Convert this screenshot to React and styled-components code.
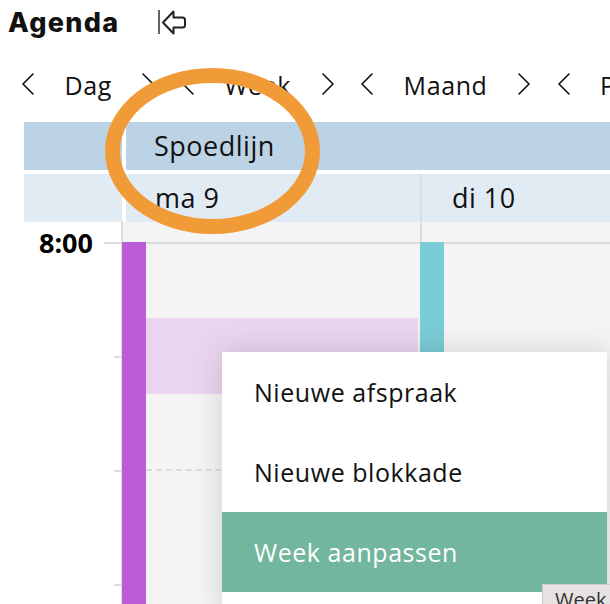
import React from "react";
import styled, { createGlobalStyle } from "styled-components";

const Global = createGlobalStyle`
  html, body {
    margin: 0;
    padding: 0;
    background: #fff;
    font-family: "Open Sans", "Noto Sans", sans-serif;
    color: #111;
  }
`;

const Page = styled.div`
  position: relative;
  width: 610px;
  height: 604px;
  overflow: hidden;
  background: #fff;
`;

const Header = styled.header`
  display: flex;
  align-items: center;
  height: 44px;
  padding-left: 8px;
`;

const Title = styled.h1`
  margin: 0;
  width: 149px;
  font-family: Inter, sans-serif;
  font-size: 27px;
  font-weight: 800;
  letter-spacing: 1.3px;
  color: #111;
`;

const Nav = styled.nav`
  display: flex;
  align-items: center;
  height: 34px;
  margin-top: 24px;
  padding-left: 22px;
  gap: 27.5px;
  white-space: nowrap;
`;

const NavGroup = styled.div`
  display: flex;
  align-items: center;
  gap: 30.5px;
  flex: none;
`;

const NavLabel = styled.span`
  font-size: 25px;
  line-height: 34px;
  letter-spacing: 0.6px;
`;

const Calendar = styled.section`
  margin-top: 20px;
  padding-left: 24px;
`;

const ResourceRow = styled.div`
  display: grid;
  grid-template-columns: 98px 1fr;
  column-gap: 4px;
  height: 48px;
  margin-bottom: 4px;
`;

const ResourceCell = styled.div`
  display: flex;
  align-items: center;
  box-sizing: border-box;
  padding: 0 0 2px ${(p) => p.$inset || 0}px;
  background: #bcd3e6;
  font-size: 27px;
  letter-spacing: 0.5px;
`;

const DayRow = styled.div`
  display: grid;
  grid-template-columns: 102px 294px 1fr;
  height: 48px;
`;

const DayCell = styled.div`
  display: flex;
  align-items: center;
  box-sizing: border-box;
  padding: 0 0 2px ${(p) => p.$inset || 0}px;
  margin-right: ${(p) => (p.$gutter ? 4 : 0)}px;
  background: #e0ebf4;
  border-left: ${(p) => (p.$divider ? "2px solid #dcdcdc" : "none")};
  font-size: 27px;
  letter-spacing: 0.5px;
`;

const Body = styled.div`
  display: grid;
  grid-template-columns: 98px 298px 1fr;
  height: 382px;
`;

const TimeColumn = styled.div`
  display: flex;
  flex-direction: column;
  align-items: flex-end;
`;

const TimeSlot = styled.div`
  position: relative;
  align-self: stretch;
  height: 42px;
`;

const TimeLabel = styled.div`
  display: flex;
  align-items: center;
  justify-content: flex-end;
  height: 40px;
  padding-right: 29px;
  font-size: 27px;
  font-weight: 700;
  color: #000;
`;

const TimeLine = styled.div`
  position: absolute;
  right: 0;
  top: 20px;
  width: 18px;
  height: 2px;
  background: #dcdcdc;
`;

const Tick = styled.div`
  width: 8px;
  height: 2px;
  background: #dcdcdc;
  margin-top: ${(p) => p.$top}px;
`;

const DayColumn = styled.div`
  position: relative;
  background: #f4f4f4;
  border-left: 2px solid #dcdcdc;
  margin-left: ${(p) => p.$shift || 0}px;
`;

const HourLine = styled.div`
  margin-top: 20px;
  height: 2px;
  background: #dcdcdc;
`;

const HalfLine = styled.div`
  position: absolute;
  left: 23px;
  right: 0;
  top: 247px;
  border-top: 2px dashed #dcdcdc;
`;

const EventBar = styled.div`
  position: absolute;
  top: 20px;
  left: ${(p) => p.$left || 0}px;
  bottom: 0;
  width: 24px;
  background: ${(p) => p.$color};
`;

const EventBlock = styled.div`
  position: absolute;
  top: 96px;
  left: 23px;
  width: 272px;
  height: 76px;
  background: #e9d5ef;
`;

const Menu = styled.ul`
  position: absolute;
  left: 222px;
  top: 352px;
  width: 385px;
  height: 260px;
  margin: 0;
  padding: 0;
  list-style: none;
  background: #fff;
  box-shadow: 0 0 28px rgba(0, 0, 0, 0.15);
`;

const MenuItem = styled.li`
  display: flex;
  align-items: center;
  height: 80px;
  padding-left: 32px;
  font-size: 25px;
  letter-spacing: 0.55px;
  color: ${(p) => (p.$active ? "#fff" : "#111")};
  background: ${(p) => (p.$active ? "#72b69e" : "transparent")};
`;

const Tooltip = styled.div`
  position: absolute;
  left: 542px;
  top: 584px;
  width: 100px;
  height: 40px;
  padding-left: 12px;
  background: #e6e2e2;
  border: 1px solid #cfcaca;
  font-size: 20px;
  line-height: 30px;
  color: #333;
`;

const Circle = styled.div`
  position: absolute;
  left: 105px;
  top: 68px;
  width: 215px;
  height: 166px;
  box-sizing: border-box;
  border: 15px solid #f19a38;
  border-radius: 50%;
`;

const BackIcon = () => (
  <svg width="32" height="28" viewBox="0 0 32 28" fill="none" stroke="#222" strokeWidth="2" strokeLinejoin="round">
    <path d="M2 2v24" strokeWidth="1.4" />
    <path d="M6 14.5 16.5 3.5v6h9a2.5 2.5 0 0 1 2.5 2.5v5a2.5 2.5 0 0 1-2.5 2.5h-9v6z" />
  </svg>
);

const Chevron = ({ flip }) => (
  <svg width="12" height="24" viewBox="0 0 12 24" fill="none" stroke="#111" strokeWidth="1.6" strokeLinecap="round" strokeLinejoin="round">
    <path d={flip ? "M1 1l10 10L1 21" : "M11 1 1 11l10 10"} />
  </svg>
);

const groups = ["Dag", "Week", "Maand", "Periode"];

export default function App() {
  return (
    <Page>
      <Global />
      <Header>
        <Title>Agenda</Title>
        <BackIcon />
      </Header>
      <Nav>
        {groups.map((g) => (
          <NavGroup key={g}>
            <Chevron />
            <NavLabel>{g}</NavLabel>
            <Chevron flip />
          </NavGroup>
        ))}
      </Nav>
      <Calendar>
        <ResourceRow>
          <ResourceCell />
          <ResourceCell $inset={28}>Spoedlijn</ResourceCell>
        </ResourceRow>
        <DayRow>
          <DayCell $gutter />
          <DayCell $inset={29}>ma 9</DayCell>
          <DayCell $divider $inset={30}>di 10</DayCell>
        </DayRow>
        <Body>
          <TimeColumn>
            <TimeSlot>
              <TimeLabel>8:00</TimeLabel>
              <TimeLine />
            </TimeSlot>
            <Tick $top={92} />
            <Tick $top={112} />
            <Tick $top={112} />
          </TimeColumn>
          <DayColumn $shift={-1}>
            <HourLine />
            <HalfLine />
            <EventBar $color="#bb5dd6" $left={-1} />
            <EventBlock />
          </DayColumn>
          <DayColumn>
            <HourLine />
            <EventBar $color="#7accd6" $left={-2} />
          </DayColumn>
        </Body>
      </Calendar>
      <Menu>
        <MenuItem>Nieuwe afspraak</MenuItem>
        <MenuItem>Nieuwe blokkade</MenuItem>
        <MenuItem $active>Week aanpassen</MenuItem>
      </Menu>
      <Tooltip>Week</Tooltip>
      <Circle />
    </Page>
  );
}
